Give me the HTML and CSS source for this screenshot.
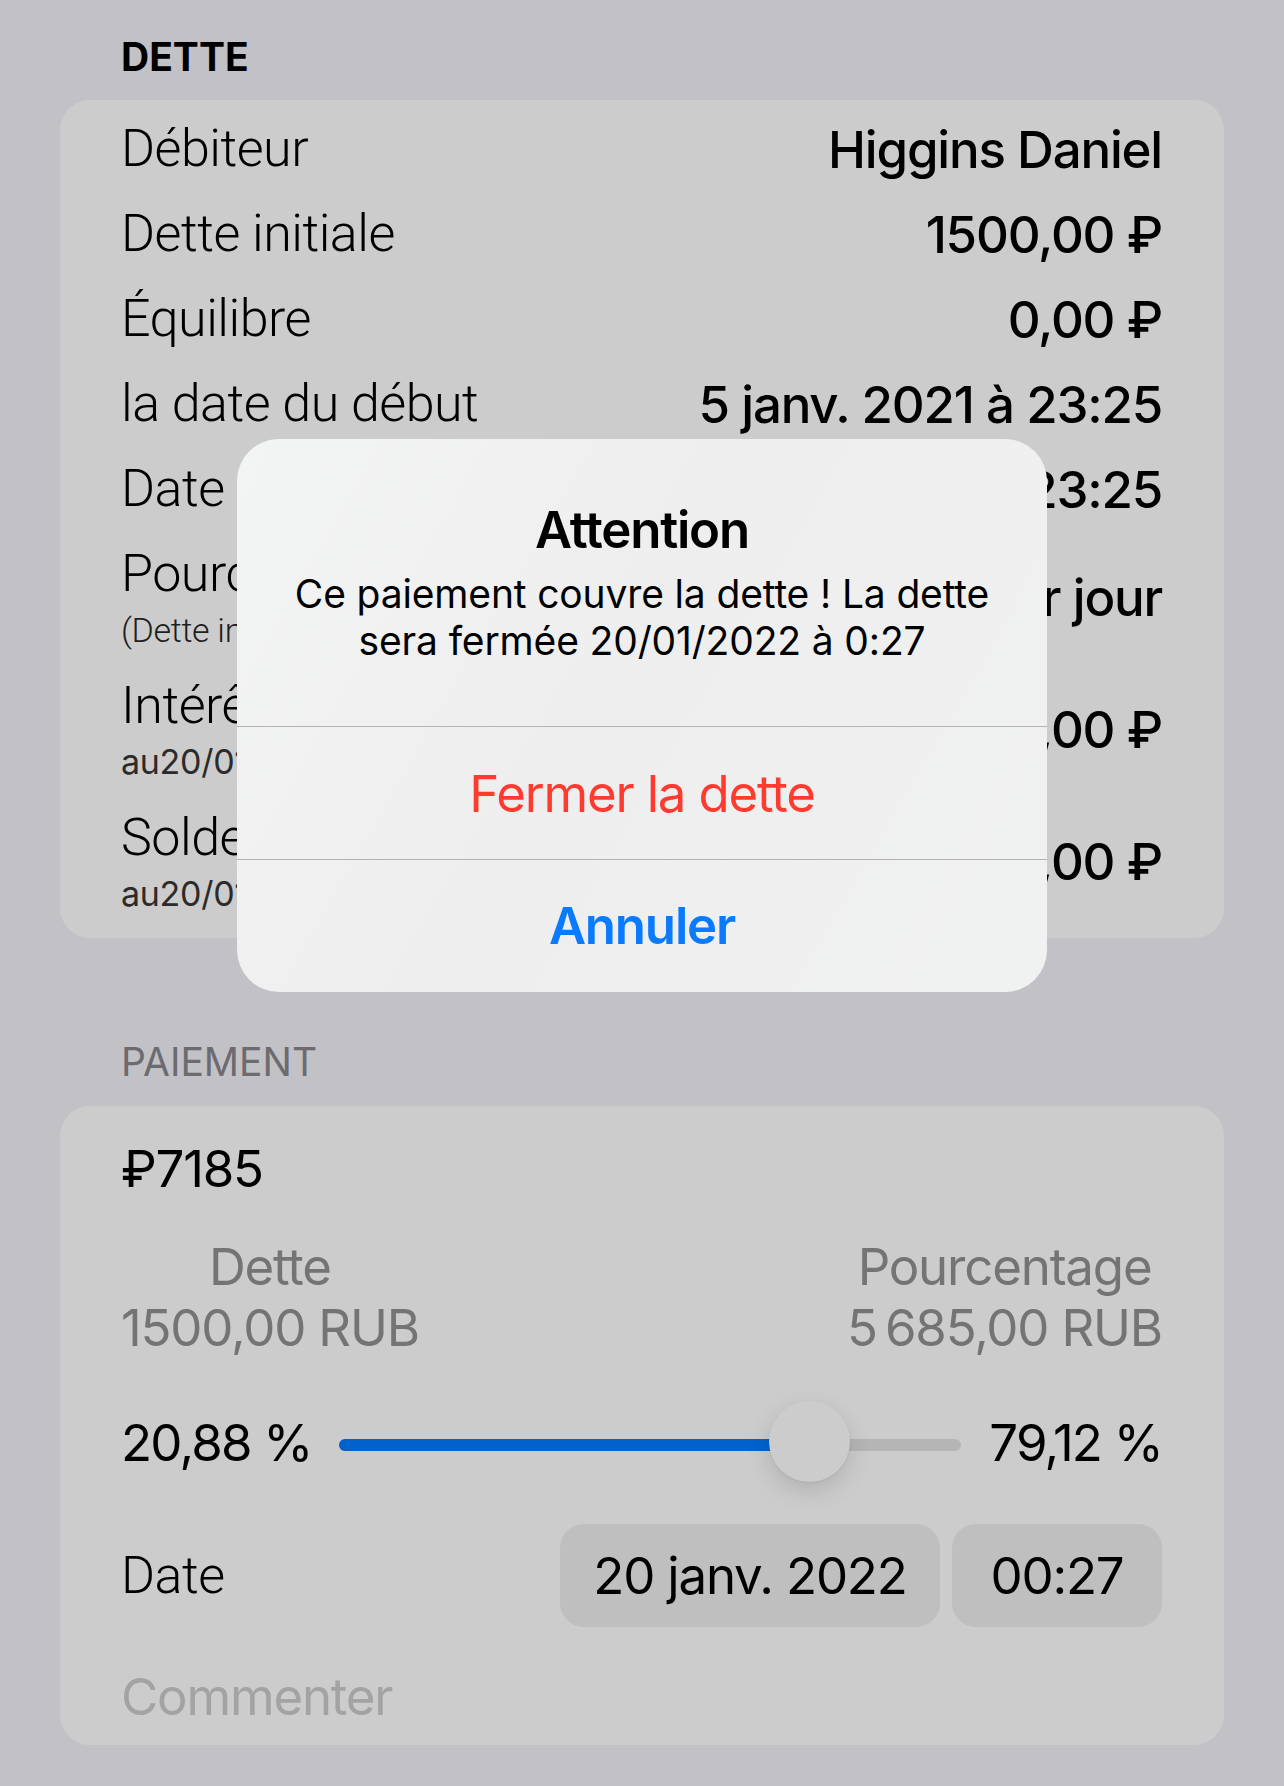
FILE: index.html
```html
<!DOCTYPE html>
<html lang="fr">
<head>
<meta charset="utf-8">
<title>Dette</title>
<link rel="stylesheet" href="styles.css">
</head>
<body>
<div class="page">
  <h2 class="sec-head sec-head--first">Dette</h2>
  <section class="card card--debt">
    <div class="row"><span class="label">Débiteur</span><span class="value">Higgins Daniel</span></div>
    <div class="row"><span class="label">Dette initiale</span><span class="value">1500,00 ₽</span></div>
    <div class="row"><span class="label">Équilibre</span><span class="value">0,00 ₽</span></div>
    <div class="row"><span class="label">la date du début</span><span class="value">5 janv. 2021 à 23:25</span></div>
    <div class="row"><span class="label">Date de fin</span><span class="value">20 janv. 2022 à 23:25</span></div>
    <div class="row row--tall">
      <div class="stack"><span class="label">Pourcentage</span><span class="sub sub--light">(Dette initiale)</span></div>
      <span class="value">0,5 % par jour</span>
    </div>
    <div class="row row--tall">
      <div class="stack"><span class="label">Intérêts</span><span class="sub">au20/01/2022</span></div>
      <span class="value">5685,00 ₽</span>
    </div>
    <div class="row row--tall">
      <div class="stack"><span class="label">Solde</span><span class="sub">au20/01/2022</span></div>
      <span class="value">7185,00 ₽</span>
    </div>
  </section>

  <h2 class="sec-head sec-head--second">Paiement</h2>
  <section class="card card--pay">
    <div class="amount">₽7185</div>
    <div class="split">
      <div class="split-col"><div class="split-label">Dette</div><div class="split-value">1500,00 RUB</div></div>
      <div class="split-col"><div class="split-label">Pourcentage</div><div class="split-value">5&#8239;685,00 RUB</div></div>
    </div>
    <div class="slider-row">
      <span class="pct">20,88 %</span>
      <div class="slider">
        <div class="slider-fill" style="width: 75.6%"></div>
        <div class="slider-thumb" style="left: calc(75.6% - 40.5px)"></div>
      </div>
      <span class="pct">79,12 %</span>
    </div>
    <div class="date-row">
      <span class="date-label">Date</span>
      <div class="pickers">
        <div class="pill pill--date">20 janv. 2022</div>
        <div class="pill pill--time">00:27</div>
      </div>
    </div>
    <div class="comment">Commenter</div>
  </section>
</div>

<div class="alert" role="alertdialog">
  <div class="alert-body">
    <div class="alert-title">Attention</div>
    <div class="alert-msg"><span class="msg-line">Ce paiement couvre la dette ! La dette</span><span class="msg-line">sera fermée 20/01/2022 à 0:27</span></div>
  </div>
  <div class="alert-btn alert-btn--destructive">Fermer la dette</div>
  <div class="alert-btn alert-btn--cancel">Annuler</div>
</div>
</body>
</html>
```

FILE: styles.css
```css
* { box-sizing: border-box; margin: 0; padding: 0; }

html, body {
  width: 1284px;
  height: 1786px;
}

body {
  background: #c2c1c6;
  font-family: Inter, "Noto Sans", sans-serif;
  color: #000;
  position: relative;
  overflow: hidden;
  letter-spacing: -1.2px;
}

.page {
  padding: 0 60px;
}

.sec-head {
  font-size: 39px;
  line-height: 39px;
  padding-left: 61px;
  text-transform: uppercase;
  letter-spacing: 0;
}

.sec-head--first {
  padding-top: 37px;
  margin-bottom: 24px;
  font-weight: 700;
}

.sec-head--second {
  margin-top: 103.5px;
  margin-bottom: 25px;
  color: #6c6b70;
  font-weight: 400;
}

.card {
  background: #cccccc;
  border-radius: 30px;
  padding: 0 62px 0 61px;
}

.card--debt {
  padding-top: 6.5px;
  padding-bottom: 10.5px;
}

.row {
  display: flex;
  justify-content: space-between;
  align-items: center;
  height: 85px;
  white-space: nowrap;
}

.row--tall {
  height: 132px;
}

.stack {
  display: flex;
  flex-direction: column;
}

.label {
  font-family: Roboto, Inter, "Noto Sans", sans-serif;
  font-size: 52px;
  font-weight: 300;
  line-height: 64px;
  letter-spacing: -0.5px;
}

.sub {
  font-size: 34px;
  line-height: 48px;
  font-weight: 400;
  color: #2b2b2b;
  letter-spacing: -0.3px;
}

.sub--light {
  font-family: Roboto, Inter, "Noto Sans", sans-serif;
  font-weight: 300;
  color: #1e1e1e;
}

.value {
  font-size: 51px;
  font-weight: 500;
}

/* Payment card */
.card--pay {
  height: 639.5px;
}

.amount {
  font-size: 51px;
  line-height: 126px;
  height: 126px;
}

.split {
  display: flex;
  justify-content: space-between;
  padding-top: 6.5px;
  color: #747474;
  font-size: 51px;
  white-space: nowrap;
}

.split-col {
  text-align: center;
}

.split-label {
  line-height: 57px;
}

.split-value {
  line-height: 66px;
}

.slider-row {
  display: flex;
  align-items: center;
  gap: 28px;
  height: 162px;
  font-size: 51px;
  white-space: nowrap;
}

.pct {
  letter-spacing: -1.8px;
}

.slider {
  flex: 1;
  height: 12px;
  border-radius: 6px;
  background: #b5b5b5;
  position: relative;
  margin-top: 6px;
}

.slider-fill {
  height: 100%;
  border-radius: 6px;
  background: #0062cc;
}

.slider-thumb {
  position: absolute;
  top: -38px;
  width: 81px;
  height: 81px;
  border-radius: 50%;
  background: #cccccc;
  box-shadow: 0 9px 24px rgba(0, 0, 0, 0.13), 0 1px 3px rgba(0, 0, 0, 0.06);
}

.date-row {
  display: flex;
  justify-content: space-between;
  align-items: center;
  height: 105px;
  font-size: 51px;
  white-space: nowrap;
}

.date-label {
  font-family: Roboto, Inter, "Noto Sans", sans-serif;
  font-size: 52px;
  font-weight: 300;
  letter-spacing: -0.5px;
}

.pickers {
  display: flex;
  gap: 12px;
}

.pill {
  height: 103px;
  line-height: 103px;
  border-radius: 24px;
  background: #bfbfbf;
  text-align: center;
}

.pill--date {
  width: 380px;
}

.pill--time {
  width: 210px;
}

.comment {
  padding-top: 20px;
  line-height: 97px;
  font-size: 51px;
  color: #a3a3a3;
}

/* Alert */
.alert {
  position: absolute;
  left: 237px;
  top: 439px;
  width: 810px;
  height: 553px;
  border-radius: 42px;
  background: linear-gradient(120deg, #f3f4f4 0%, #eeeeee 45%, #f0f1f1 100%);
  overflow: hidden;
  text-align: center;
}

.alert-body {
  height: 288px;
  padding-top: 64.5px;
  border-bottom: 1px solid #b3b3b3;
}

.alert-title {
  font-size: 51px;
  line-height: 51px;
  font-weight: 600;
}

.alert-msg {
  margin-top: 15px;
  font-size: 39px;
  line-height: 47px;
  letter-spacing: -0.15px;
  display: flex;
  flex-direction: column;
  white-space: nowrap;
}

.alert-btn {
  height: 132px;
  line-height: 132px;
  font-size: 51px;
}

.alert-btn--destructive {
  color: #ff3b30;
  border-bottom: 1px solid #b3b3b3;
  height: 133px;
  line-height: 134px;
}

.alert-btn--cancel {
  color: #0a7aff;
  font-weight: 600;
}
```
